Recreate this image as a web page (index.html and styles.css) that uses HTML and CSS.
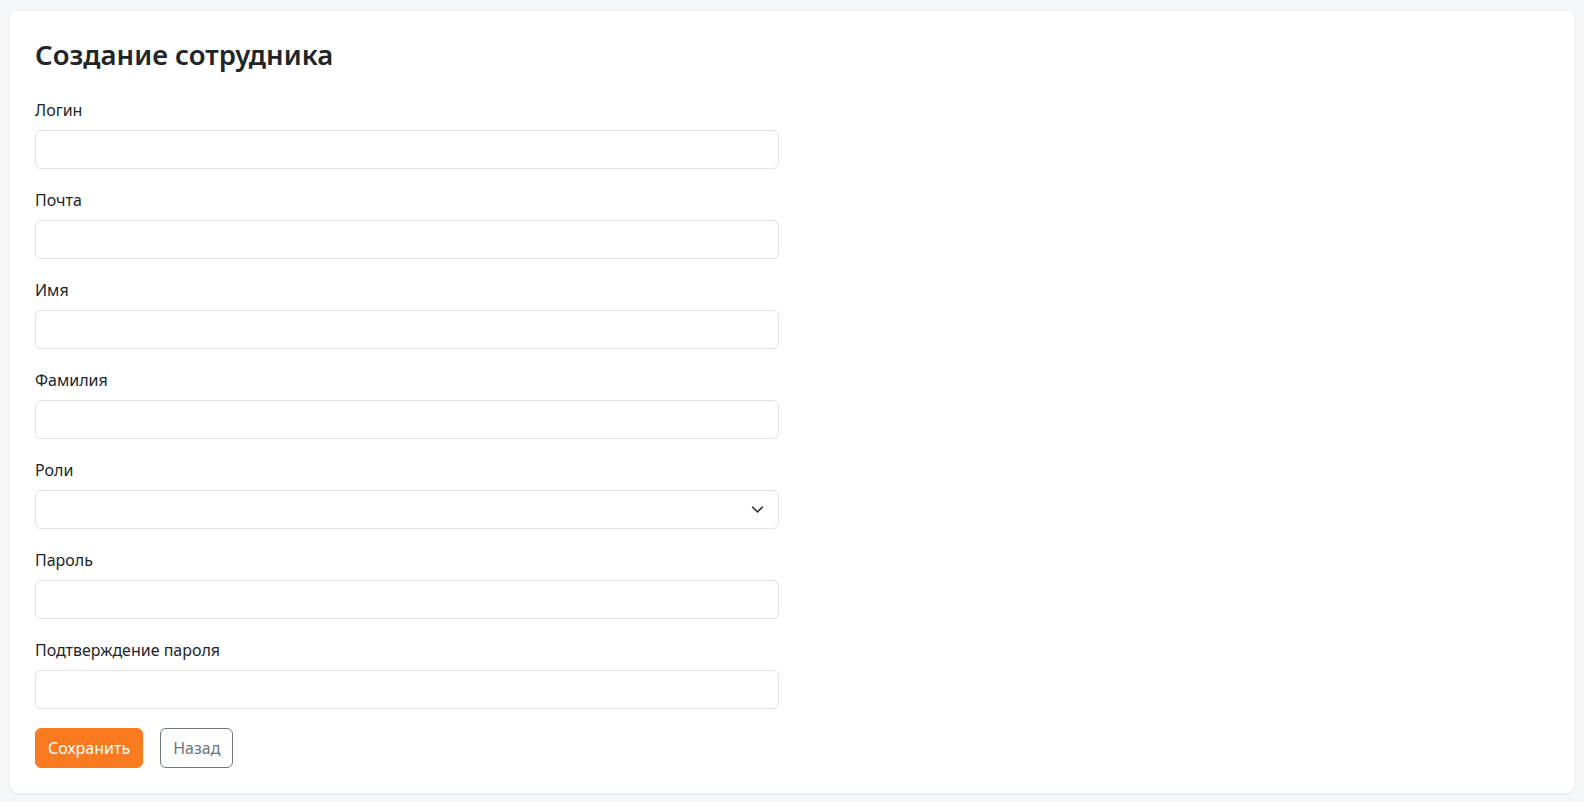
FILE: index.html
```html
<!DOCTYPE html>
<html lang="ru">
<head>
    <meta charset="UTF-8">
    <meta name="viewport" content="width=device-width, initial-scale=1.0">
    <link rel="stylesheet" href="styles.css">
</head>
<body>
    <div class="card">
        <h1 class="title">Создание сотрудника</h1>
        <form class="employee-form">
            <div class="field">
                <label for="login">Логин</label>
                <input id="login" type="text">
            </div>
            <div class="field">
                <label for="email">Почта</label>
                <input id="email" type="email">
            </div>
            <div class="field">
                <label for="first-name">Имя</label>
                <input id="first-name" type="text">
            </div>
            <div class="field">
                <label for="last-name">Фамилия</label>
                <input id="last-name" type="text">
            </div>
            <div class="field">
                <label for="roles">Роли</label>
                <div class="select-wrap">
                    <select id="roles"><option></option></select>
                    <svg class="chevron" width="16" height="16" viewBox="0 0 16 16">
                        <path d="M2 5l6 6 6-6" fill="none" stroke="#343a40" stroke-width="2" stroke-linecap="round" stroke-linejoin="round"/>
                    </svg>
                </div>
            </div>
            <div class="field">
                <label for="password">Пароль</label>
                <input id="password" type="password">
            </div>
            <div class="field">
                <label for="password-confirm">Подтверждение пароля</label>
                <input id="password-confirm" type="password">
            </div>
            <div class="actions">
                <button type="submit" class="btn btn-primary">Сохранить</button>
                <button type="button" class="btn btn-outline">Назад</button>
            </div>
        </form>
    </div>
</body>
</html>
```

FILE: styles.css
```css
body {
    margin: 0;
    padding: 11px 10px 9px;
    background-color: #f6f7f9;
    font-family: "Noto Sans", "Open Sans", sans-serif;
    font-size: 16px;
    color: #212529;
}

.card {
    background: #fff;
    border-radius: 8px;
    box-shadow: 0 1px 3px rgba(0, 0, 0, 0.08);
    padding: 28px 25px 25px;
}

.title {
    margin: 0 0 27px;
    font-size: 27.5px;
    font-weight: 600;
    line-height: 32px;
}

.employee-form {
    width: 744px;
}

.field {
    margin-bottom: 19px;
}

.field label {
    display: block;
    margin-bottom: 8px;
    font-size: 16px;
    line-height: 24px;
}

.field input,
.field select {
    display: block;
    box-sizing: border-box;
    width: 100%;
    height: 39px;
    padding: 6px 12px;
    border: 1px solid #dee2e6;
    border-radius: 6px;
    background: #fff;
    font: inherit;
    outline: none;
}

.select-wrap {
    position: relative;
}

.field select {
    appearance: none;
    -webkit-appearance: none;
}

.chevron {
    position: absolute;
    right: 15px;
    top: 13px;
    width: 13px;
    height: 13px;
    pointer-events: none;
}

.actions {
    display: flex;
    gap: 17px;
}

.btn {
    height: 40px;
    padding: 0 12px;
    border-radius: 6px;
    font-family: inherit;
    font-size: 16px;
    cursor: pointer;
}

.btn-primary {
    background: #f97a1f;
    border: 1px solid #f97a1f;
    color: #fff;
}

.btn-outline {
    background: #fff;
    border: 1px solid #6c757d;
    color: #6c757d;
}
```
